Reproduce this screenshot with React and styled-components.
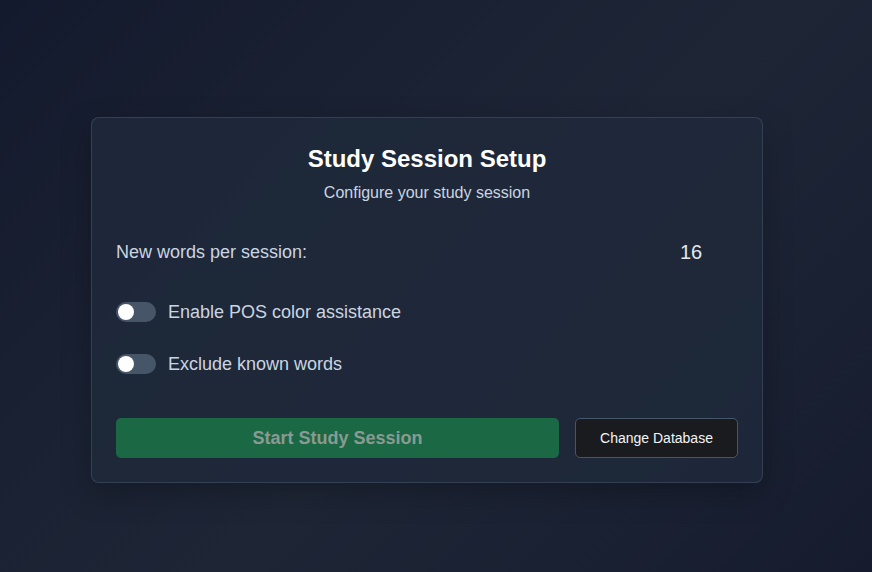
import React, { useState } from 'react'
import styled, { createGlobalStyle } from 'styled-components'

const GlobalStyle = createGlobalStyle`
    html, body {
        margin: 0;
        padding: 0;
    }
    body {
        font-family: "Liberation Sans", Arial, sans-serif;
        background: linear-gradient(135deg, #141a2d 0%, #1e2636 55%, #161c2e 100%);
        min-height: 100vh;
    }
`

export default function App() {
    const [wordsPerSession, setWordsPerSession] = useState(16)
    const [posColors, setPosColors] = useState(false)
    const [excludeKnown, setExcludeKnown] = useState(false)

    return (
        <>
        <GlobalStyle />
        <Page>
            <Card>
                <Title>Study Session Setup</Title>
                <Subtitle>Configure your study session</Subtitle>

                <FieldRow>
                    <Label>New words per session:</Label>
                    <NumberInput
                        type="number"
                        value={wordsPerSession}
                        onChange={(e) => setWordsPerSession(e.target.value)}
                    />
                </FieldRow>

                <ToggleRow>
                    <Toggle on={posColors} onClick={() => setPosColors(!posColors)} />
                    <Label>Enable POS color assistance</Label>
                </ToggleRow>

                <ToggleRow>
                    <Toggle on={excludeKnown} onClick={() => setExcludeKnown(!excludeKnown)} />
                    <Label>Exclude known words</Label>
                </ToggleRow>

                <Actions>
                    <StartButton disabled>Start Study Session</StartButton>
                    <SecondaryButton>Change Database</SecondaryButton>
                </Actions>
            </Card>
        </Page>
        </>
    )
}

const Toggle = ({ on, onClick }) => (
    <Track $on={on} onClick={onClick}>
        <Knob $on={on} />
    </Track>
)

const Page = styled.div`
    min-height: 572px;
    display: flex;
    justify-content: center;
    padding: 117px 18px 0 0;
    box-sizing: border-box;
`

const Card = styled.div`
    width: 672px;
    height: 366px;
    box-sizing: border-box;
    background: rgba(30, 41, 59, 0.85);
    border: 1px solid rgba(71, 85, 105, 0.55);
    border-radius: 8px;
    padding: 27px 24px 24px;
    box-shadow: 0 10px 30px rgba(0, 0, 0, 0.25);
    display: flex;
    flex-direction: column;
`

const Title = styled.h2`
    margin: 0;
    text-align: center;
    color: #ffffff;
    font-size: 24px;
    font-weight: bold;
    line-height: 28px;
`

const Subtitle = styled.p`
    margin: 10px 0 0;
    text-align: center;
    color: #cbd5e1;
    font-size: 16px;
    line-height: 20px;
`

const FieldRow = styled.div`
    display: flex;
    align-items: center;
    justify-content: space-between;
    margin-top: 36px;
    height: 26px;
`

const Label = styled.span`
    color: #cbd5e1;
    font-size: 18px;
`

const NumberInput = styled.input`
    width: 58px;
    margin: 0;
    background: transparent;
    border: none;
    outline: none;
    color: #e2e8f0;
    font-family: "Liberation Sans", Arial, sans-serif;
    font-size: 20px;
    text-align: left;
    padding: 0;
    -moz-appearance: textfield;
    &::-webkit-outer-spin-button,
    &::-webkit-inner-spin-button {
        -webkit-appearance: none;
        margin: 0;
    }
`

const ToggleRow = styled.div`
    display: flex;
    align-items: center;
    gap: 12px;
    margin-top: 37px;
    height: 20px;
    & + & {
        margin-top: 32px;
    }
`

const Track = styled.div`
    position: relative;
    width: 40px;
    height: 20px;
    border-radius: 10px;
    background: ${(p) => (p.$on ? '#22c55e' : '#475569')};
    cursor: pointer;
    flex-shrink: 0;
`

const Knob = styled.div`
    position: absolute;
    top: 2px;
    left: ${(p) => (p.$on ? '22px' : '2px')};
    width: 16px;
    height: 16px;
    border-radius: 50%;
    background: #ffffff;
`

const Actions = styled.div`
    display: flex;
    gap: 16px;
    margin-top: auto;
`

const StartButton = styled.button`
    flex: 1;
    height: 40px;
    border: none;
    border-radius: 5px;
    background: #1a6844;
    color: #8a9a93;
    font-family: "Liberation Sans", Arial, sans-serif;
    font-size: 18px;
    font-weight: bold;
`

const SecondaryButton = styled.button`
    width: 163px;
    height: 40px;
    border: 1px solid #475569;
    border-radius: 5px;
    background: #1a1b1f;
    color: #f1f5f9;
    font-family: "Liberation Sans", Arial, sans-serif;
    font-size: 14px;
    cursor: pointer;
`
